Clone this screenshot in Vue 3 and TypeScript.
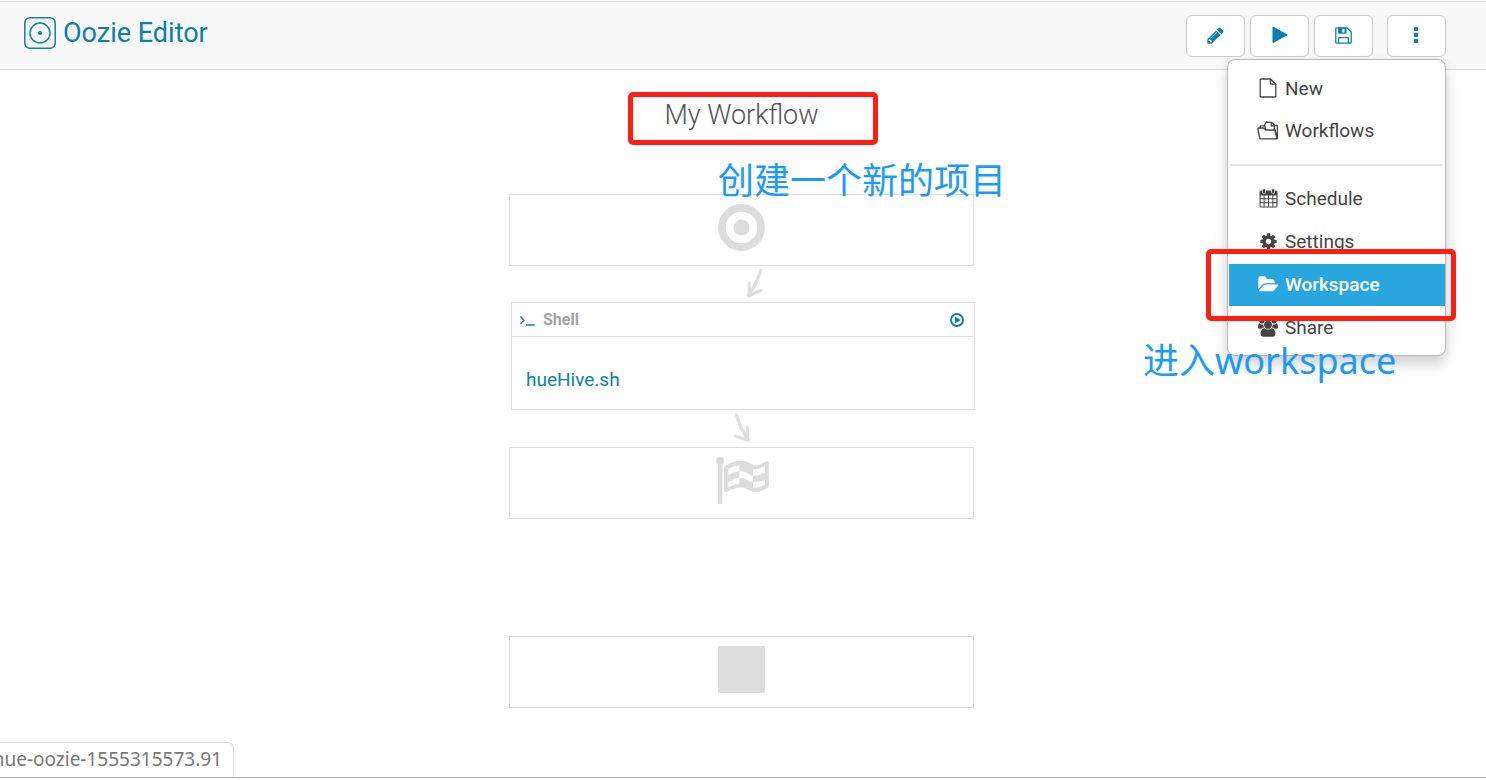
<script setup lang="ts">
import { ref } from 'vue'

type MenuItem = { id: string; label: string }

const groups: MenuItem[][] = [
  [
    { id: 'new', label: 'New' },
    { id: 'workflows', label: 'Workflows' },
  ],
  [
    { id: 'schedule', label: 'Schedule' },
    { id: 'settings', label: 'Settings' },
    { id: 'workspace', label: 'Workspace' },
    { id: 'share', label: 'Share' },
  ],
]

const active = ref('workspace')
</script>

<template>
  <div class="page">
    <header class="topbar">
      <a class="brand" href="#editor">
        <svg width="32" height="32" viewBox="0 0 32 32" fill="none" stroke="currentColor" aria-hidden="true">
          <rect x="0.8" y="0.8" width="30.4" height="30.4" rx="5" stroke-width="1.5" />
          <circle cx="16" cy="16" r="10" stroke-width="1.5" />
          <circle cx="16" cy="16" r="2" fill="currentColor" stroke="none" />
        </svg>
        <span>Oozie Editor</span>
      </a>

      <div class="actions">
        <button type="button" aria-label="Edit">
          <svg width="19" height="19" viewBox="0 0 1792 1792" fill="currentColor">
            <path d="M491 1536l91-91-235-235-91 91v107h128v128h107zm523-928q0-22-22-22-10 0-17 7l-542 542q-7 7-7 17 0 22 22 22 10 0 17-7l542-542q7-7 7-17zm-54-192l416 416-832 832h-416v-416zm683 96q0 53-37 90l-166 166-416-416 166-165q36-38 90-38 53 0 91 38l235 234q37 39 37 91z" />
          </svg>
        </button>
        <button type="button" aria-label="Submit">
          <svg width="16" height="18" viewBox="0 0 16 18" fill="currentColor">
            <path d="M.5 1.2Q.5.2 1.4.7L15 8.3q.8.5 0 1L1.4 16.900Q.5 17.300.5 16.300z" />
          </svg>
        </button>
        <button type="button" aria-label="Save">
          <svg width="17" height="17" viewBox="0 0 17 17" fill="none" stroke="currentColor" stroke-width="1.3">
            <path d="M1.600.8H12L16.200 5V15.400q0 .8-.8.8H1.600q-.8 0-.8-.8V1.600q0-.8.8-.8z" />
            <path d="M3.600 16V11.200q0-.6.6-.6H12.800q.6 0 .6.6V16" />
            <path d="M3 .6H11.500V6q0 .8-.8.8H3.800Q3 6.800 3 6zM7.300 1.700V5.400H9.500V1.700z" fill="currentColor" fill-rule="evenodd" stroke="none" />
          </svg>
        </button>
        <button class="more" type="button" aria-label="More" aria-haspopup="true" aria-expanded="true">
          <svg width="5" height="16" viewBox="0 0 5 16" fill="currentColor">
            <rect width="4" height="4" rx=".7" />
            <rect y="6" width="4" height="4" rx=".7" />
            <rect y="12" width="4" height="4" rx=".7" />
          </svg>
        </button>

        <nav class="menu" aria-label="More actions">
          <ul v-for="(group, g) in groups" :key="g">
            <li v-for="item in group" :key="item.id">
              <a :href="'#' + item.id" :class="{ active: item.id === active }" @click.prevent="active = item.id">
                <span class="icon">
                  <svg v-if="item.id === 'new'" width="18" height="20" viewBox="0 0 18 20" fill="none" stroke="currentColor" stroke-width="1.300">
                    <path d="M11.500 1H2q-.8 0-.8.8V18.200q0 .8.8.8H16q.8 0 .8-.8V6.200zM11.500 1V5.400q0 .8.8.8H16.800" />
                  </svg>
                  <svg v-else-if="item.id === 'workflows'" width="22" height="19" viewBox="0 0 22 19" fill="none" stroke="currentColor" stroke-width="1.300" stroke-linejoin="round">
                    <path d="M3.500 17.800Q2.900 17.800 2.700 17L.8 7.800Q.7 7 1.500 7H6.500L8.500 9H17.200Q18 9 18.200 9.800L20 17.800z" />
                    <path d="M3.200 7V5.500Q3.200 4.800 4 4.800H7.500M8.300 8.800V7L7.600 4 9.200 1 15 1.600 17.400 4V9M14.300 1.600V4.800H17M17.400 4.500H19.800Q20.400 4.500 20.400 5.200V17.500L17.400 7" />
                  </svg>
                  <svg v-else-if="item.id === 'schedule'" width="19" height="20" viewBox="0 0 19 20" fill="currentColor">
                    <path fill-rule="evenodd" d="M2 2.500H17Q18.500 2.500 18.500 4V18Q18.500 19.500 17 19.500H2Q.5 19.500.5 18V4Q.5 2.500 2 2.500zM1.600 7.500V10.200H4.600V7.500zM5.600 7.500V10.200H9V7.500zM10 7.500V10.200H13.400V7.500zM14.400 7.500V10.200H17.400V7.500zM1.600 11.200V14.300H4.600V11.200zM5.600 11.200V14.300H9V11.200zM10 11.200V14.300H13.400V11.200zM14.400 11.200V14.300H17.400V11.200zM1.600 15.300V18.400H4.600V15.300zM5.600 15.300V18.400H9V15.300zM10 15.300V18.400H13.400V15.300zM14.400 15.300V18.400H17.400V15.300z" />
                    <rect x="3.500" y=".7" width="3" height="4.800" rx="1.200" stroke="#fff" stroke-width=".7" />
                    <rect x="12.500" y=".7" width="3" height="4.800" rx="1.200" stroke="#fff" stroke-width=".7" />
                  </svg>
                  <svg v-else-if="item.id === 'settings'" width="19" height="19" viewBox="0 0 1792 1792" fill="currentColor">
                    <path d="M1152 896q0-106-75-181t-181-75-181 75-75 181 75 181 181 75 181-75 75-181zm512-109v222q0 12-8 23t-20 13l-185 28q-19 54-39 91 35 50 107 138 10 12 10 25t-9 23q-27 37-99 108t-94 71q-12 0-26-9l-138-108q-44 23-91 38-16 136-29 186-7 28-36 28h-222q-14 0-24.500-8.500t-11.500-21.500l-28-184q-49-16-90-37l-141 107q-10 9-25 9-14 0-25-11-126-114-165-168-7-10-7-23 0-12 8-23 15-21 51-66.500t54-70.500q-27-50-41-99l-183-27q-13-2-21-12.500t-8-23.500v-222q0-12 8-23t19-13l186-28q14-46 39-92-40-57-107-138-10-12-10-24 0-10 9-23 26-36 98.500-107.500t94.500-71.500q13 0 26 10l138 107q44-23 91-38 16-136 29-186 7-28 36-28h222q14 0 24.500 8.500t11.500 21.500l28 184q49 16 90 37l142-107q9-9 24-9 13 0 25 10 129 119 165 170 7 8 7 22 0 12-8 23-15 21-51 66.500t-54 70.500q26 50 41 98l183 28q13 2 21 12.500t8 23.500z" />
                  </svg>
                  <svg v-else-if="item.id === 'workspace'" width="21" height="19" viewBox="0 0 1920 1792" fill="currentColor">
                    <path d="M1879 952q0 31-31 66l-336 396q-43 51-120.500 86.500t-143.500 35.500h-1088q-34 0-60.500-13t-26.500-43q0-31 31-66l336-396q43-51 120.500-86.500t143.500-35.500h1088q34 0 60.500 13t26.500 43zm-343-344v160h-832q-94 0-197 47.500t-164 119.500l-337 396-5 6q0-4-.5-12.500t-.5-12.500v-960q0-92 66-158t158-66h320q92 0 158 66t66 158v32h544q92 0 158 66t66 158z" />
                  </svg>
                  <svg v-else width="20" height="19" viewBox="0 0 1920 1792" fill="currentColor">
                    <path d="M593 896q-162 5-265 128h-134q-82 0-138-40.500t-56-118.500q0-353 124-353 6 0 43.500 21t97.500 42.500 119 21.500q67 0 133-23-5 37-5 66 0 139 81 256zm1071 637q0 120-73 189.500t-194 69.500h-874q-121 0-194-69.500t-73-189.500q0-53 3.500-103.500t14-109 26.500-108.500 43-97.500 62-81 85.500-53.500 111.500-20q10 0 43 21.500t73 48 107 48 135 21.500 135-21.500 107-48 73-48 43-21.500q61 0 111.500 20t85.500 53.500 62 81 43 97.500 26.500 108.500 14 109 3.500 103.500zm-1024-1277q0 106-75 181t-181 75-181-75-75-181 75-181 181-75 181 75 75 181zm704 384q0 159-112.500 271.500t-271.500 112.500-271.500-112.500-112.500-271.500 112.500-271.500 271.500-112.500 271.500 112.500 112.500 271.500zm576 225q0 78-56 118.500t-138 40.500h-134q-103-123-265-128 81-117 81-256 0-29-5-66 66 23 133 23 59 0 119-21.500t97.500-42.500 43.500-21q124 0 124 353zm-128-609q0 106-75 181t-181 75-181-75-75-181 75-181 181-75 181 75 75 181z" />
                  </svg>
                </span>
                {{ item.label }}
              </a>
              <span v-if="item.id === 'workspace'" class="mark mark-item"></span>
            </li>
          </ul>
          <p class="note note-menu">进入workspace</p>
        </nav>
      </div>
    </header>

    <main class="canvas">
      <div class="heading">
        <h1>My Workflow</h1>
        <span class="mark mark-title"></span>
        <p class="note note-title">创建一个新的项目</p>
      </div>

      <section class="node" aria-label="Start">
        <svg width="47" height="47" viewBox="0 0 47 47">
          <circle cx="23.500" cy="23.500" r="19.600" fill="none" stroke="currentColor" stroke-width="7.600" />
          <circle cx="23.500" cy="23.500" r="8" fill="currentColor" />
        </svg>
      </section>

      <div class="link">
        <svg width="49" height="36" viewBox="0 0 49 36" fill="none" stroke="currentColor" stroke-width="3.200" stroke-linecap="round">
          <path d="M43.800 4Q40.500 17 31.500 29M32.200 17V29.500M44 24.500L31.500 29.800" />
        </svg>
      </div>

      <section class="action">
        <div class="action-head">
          <svg width="17" height="14" viewBox="0 0 17 14" fill="none" stroke="currentColor" stroke-width="1.400">
            <path d="M1.500 3.500L5 7.200 1.500 11M7 12H15.500" />
          </svg>
          <h2>Shell</h2>
          <button type="button" aria-label="Run action">
            <svg width="14" height="14" viewBox="0 0 14 14">
              <circle cx="7" cy="7" r="6" fill="none" stroke="currentColor" stroke-width="1.900" />
              <path d="M4.800 4.100Q4.800 3.600 5.300 3.800L10.300 6.700Q10.700 7 10.300 7.300L5.300 10.200Q4.800 10.400 4.800 9.900z" fill="currentColor" />
            </svg>
          </button>
        </div>
        <div class="action-body">
          <a href="#hueHive.sh">hueHive.sh</a>
        </div>
      </section>

      <div class="link">
        <svg width="49" height="36" viewBox="0 0 49 36" fill="none" stroke="currentColor" stroke-width="3.200" stroke-linecap="round">
          <path d="M19.500 4Q23.500 18 31 28.500M30.300 16V29M18.500 25L31.300 29.500" />
        </svg>
      </div>

      <section class="node" aria-label="End">
        <svg width="55" height="47" viewBox="-6 0 165 141">
          <circle cx="12" cy="12" r="12" fill="currentColor" />
          <path d="M6 12H19V138Q19 141 16 141H9Q6 141 6 138z" fill="currentColor" />
          <path d="M24 33Q24 29 27 27 54 11 74 11 92 11 105 20 116 27 125 25 136 22 150 13 158 11 158 17V86Q158 90 154 93 136 105 119 105 108 105 90 95 78 88 60 93 46 98 32 105 24 107 24 100z" fill="currentColor" />
          <path d="M37 36Q55 26 70 25V43Q53 45 37 54zM37 75Q53 65 70 62V43Q90 44 99 52 106 56 111 56V75Q127 77 147 68V83Q128 93 111 92V75Q102 75 91 68 82 62 70 62V80Q53 82 37 91zM111 37Q125 38 147 27V47Q128 56 111 56z" fill="#fff" />
        </svg>
      </section>

      <section class="node kill" aria-label="Kill">
        <svg width="47" height="47" viewBox="0 0 47 47">
          <rect width="47" height="47" rx="2" fill="currentColor" />
        </svg>
      </section>
    </main>

    <footer class="status">
      <span>hue-oozie-1555315573.91</span>
    </footer>
  </div>
</template>

<style>
body {
  margin: 0;
  background: #fff;
}
</style>

<style scoped>
* {
  box-sizing: border-box;
}

.page {
  display: flex;
  flex-direction: column;
  min-height: 100vh;
  padding: 1px 0 2px;
  font-family: Roboto, "Liberation Sans", sans-serif;
  font-size: 19px;
  color: #444;
}

svg {
  display: block;
}

h1,
h2,
p,
ul {
  margin: 0;
  padding: 0;
}

a {
  color: inherit;
  text-decoration: none;
}

button {
  display: flex;
  align-items: center;
  justify-content: center;
  padding: 0;
  color: #0b7fad;
  cursor: pointer;
}

.topbar {
  display: flex;
  justify-content: space-between;
  padding: 13px 40px 12px 24px;
  background: #f8f8f8;
  border-top: 1px solid #dcdcdc;
  border-bottom: 1px solid #dcdcdc;
}

.brand {
  display: flex;
  align-items: center;
  gap: 7px;
  height: 36px;
  font-size: 27px;
  color: #0b7fad;
}

.actions {
  position: relative;
  display: flex;
  gap: 5px;
}

.actions button {
  width: 59px;
  height: 42px;
  padding-bottom: 2px;
  background: #fff;
  border: 1px solid #ccc;
  border-radius: 6px;
}

.actions .more {
  margin-left: 9px;
}

.menu {
  position: absolute;
  z-index: 2;
  top: 44px;
  right: 0;
  width: 219px;
  padding: 8px 0 6px;
  background: #fff;
  border: 1px solid #b8b8b8;
  border-radius: 8px;
  box-shadow: 0 7px 14px rgba(0, 0, 0, 0.2);
}

.menu ul {
  display: flex;
  flex-direction: column;
  list-style: none;
}

.menu ul + ul {
  gap: 1px;
  margin: 12px 0 0;
}

.menu ul + ul::before {
  content: "";
  height: 2px;
  margin: 0 2px 11px;
  background: #e5e5e5;
}

.menu li {
  position: relative;
}

.menu a {
  display: flex;
  align-items: center;
  gap: 5px;
  height: 42px;
  margin-left: 1px;
  padding: 0 0 2px 27px;
}

.menu a.active {
  color: #fff;
  font-weight: 500;
  background: #2aa6df;
}

.icon {
  display: flex;
  justify-content: center;
  width: 24px;
}

.mark {
  position: absolute;
  z-index: 3;
  border: 5px solid #ff1e10;
  border-radius: 5px;
  pointer-events: none;
}

.mark-item {
  inset: -15px -11px -15px -22px;
}

.mark-title {
  inset: 22px auto auto 119px;
  width: 250px;
  height: 53px;
}

.note {
  position: absolute;
  z-index: 4;
  font-family: "Noto Sans", "Noto Sans CJK SC", sans-serif;
  font-size: 36px;
  font-weight: 400;
  line-height: 48px;
  color: #1a9aff;
  white-space: nowrap;
}

.note-menu {
  left: -85px;
  bottom: -30px;
}

.note-title {
  top: 87px;
  left: 209px;
}

.canvas {
  flex: 1;
  width: 468px;
  max-width: 100%;
  margin: 0 auto;
  padding: 0 3px 34px 0;
}

.heading {
  position: relative;
  padding: 29px 0 63px;
}

h1 {
  font-size: 27px;
  font-weight: 300;
  line-height: 32px;
  text-align: center;
  color: #555;
}

.node {
  display: flex;
  justify-content: center;
  height: 72px;
  padding-top: 9px;
  color: #dcdcdc;
  border: 1px solid #dcdcdc;
}

.kill {
  margin-top: 117px;
}

.link {
  display: flex;
  justify-content: center;
  color: #dfdfdf;
}

.action {
  margin: 0 -1px 1px 2px;
  border: 1px solid #dcdcdc;
}

.action-head {
  display: flex;
  align-items: center;
  gap: 7px;
  height: 34px;
  padding: 0 10px 0 7px;
  color: #0b7fad;
  border-bottom: 1px solid #e3e3e3;
}

h2 {
  flex: 1;
  font-size: 16px;
  font-weight: 700;
  color: #a3a3a3;
}

.action-head button {
  background: none;
  border: 0;
}

.action-body {
  padding: 31px 14px 18px;
  line-height: 23px;
  color: #0b7fad;
}

.status {
  display: flex;
  border-bottom: 1px solid #aaa;
}

.status span {
  display: flex;
  justify-content: flex-end;
  width: 234px;
  height: 35px;
  padding-right: 11px;
  font-family: "Noto Sans", "Open Sans", sans-serif;
  font-size: 19px;
  line-height: 33px;
  color: #777;
  white-space: nowrap;
  border: 1px solid #dcdcdc;
  border-width: 1px 1px 0 0;
  border-radius: 0 6px 0 0;
}
</style>
